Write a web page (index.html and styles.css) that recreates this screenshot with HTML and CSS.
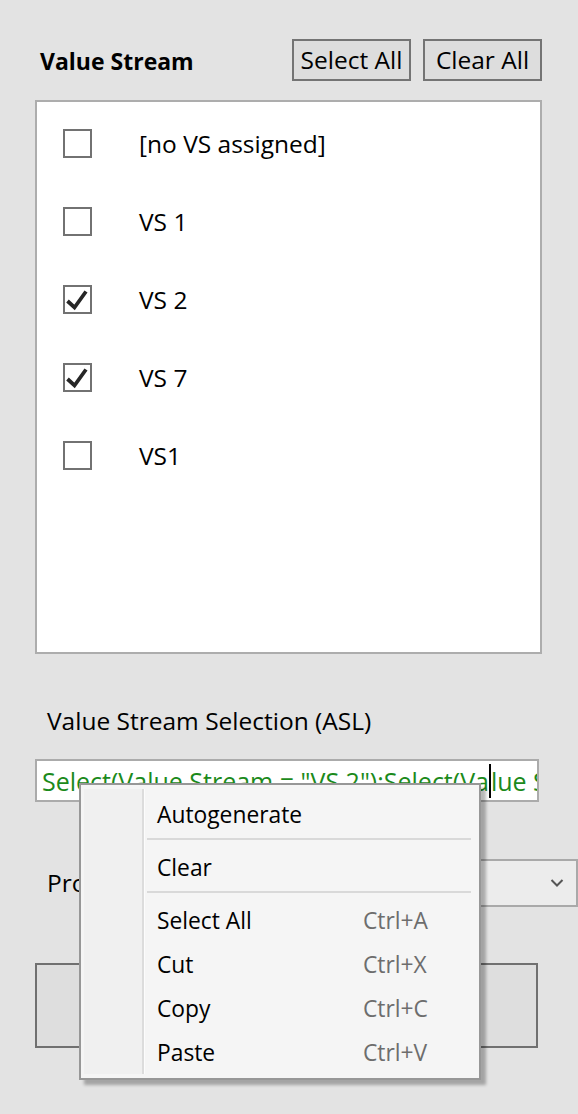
FILE: index.html
```html
<!DOCTYPE html>
<html>
<head>
<meta charset="utf-8">
<link rel="stylesheet" href="styles.css">
</head>
<body>
<div class="page">
  <div class="header">
    <span class="title">Value Stream</span>
    <div class="header-buttons">
      <button class="btn">Select All</button>
      <button class="btn">Clear All</button>
    </div>
  </div>

  <div class="listbox">
    <div class="row"><span class="check"></span><span class="item">[no VS assigned]</span></div>
    <div class="row"><span class="check"></span><span class="item">VS 1</span></div>
    <div class="row"><span class="check"><svg viewBox="0 0 25 25" width="25" height="25"><polyline points="2.5,14 9.5,20.5 21,4.5" fill="none" stroke="#262626" stroke-width="3.8" stroke-linejoin="miter"/></svg></span><span class="item">VS 2</span></div>
    <div class="row"><span class="check"><svg viewBox="0 0 25 25" width="25" height="25"><polyline points="2.5,14 9.5,20.5 21,4.5" fill="none" stroke="#262626" stroke-width="3.8" stroke-linejoin="miter"/></svg></span><span class="item">VS 7</span></div>
    <div class="row"><span class="check"></span><span class="item">VS1</span></div>
  </div>

  <div class="section-label">Value Stream Selection (ASL)</div>
  <div class="textbox"><span class="asl">Select(Value Stream = "VS 2");Select(Va</span><span class="caret"></span><span class="asl">lue S</span></div>

  <div class="combo-row">
    <span class="combo-label">Process</span>
    <div class="combo"><svg class="chev" viewBox="0 0 14 10" width="14" height="10"><polyline points="1.5,2 7,7.5 12.5,2" fill="none" stroke="#555" stroke-width="2"/></svg></div>
  </div>

  <div class="big-button"></div>

  <div class="menu">
    <div class="menu-list">
      <div class="mi"><span>Autogenerate</span><span class="sc"></span></div>
      <div class="sep"></div>
      <div class="mi"><span>Clear</span><span class="sc"></span></div>
      <div class="sep"></div>
      <div class="mi"><span>Select All</span><span class="sc">Ctrl+A</span></div>
      <div class="mi"><span>Cut</span><span class="sc">Ctrl+X</span></div>
      <div class="mi"><span>Copy</span><span class="sc">Ctrl+C</span></div>
      <div class="mi"><span>Paste</span><span class="sc">Ctrl+V</span></div>
    </div>
  </div>
</div>
</body>
</html>
```

FILE: styles.css
```css
html, body {
  margin: 0;
  padding: 0;
  background: #e3e3e3;
}
body {
  font-family: "Open Sans", "Noto Sans", sans-serif;
  font-size: 24.5px;
  color: #000;
  width: 578px;
  height: 1114px;
  overflow: hidden;
}
.page {
  position: relative;
  padding: 39px 0 0 35px;
}
.header {
  display: flex;
  align-items: center;
  width: 507px;
  height: 42px;
}
.title {
  font-weight: bold;
  font-size: 23px;
  padding-left: 5px;
  padding-top: 2px;
}
.header-buttons {
  margin-left: auto;
  display: flex;
  gap: 12px;
}
.btn {
  font-family: inherit;
  font-size: 24.5px;
  color: #000;
  background: #dddddd;
  border: 2px solid #747474;
  box-sizing: border-box;
  width: 119px;
  height: 42px;
  padding: 0;
  line-height: 36px;
  margin: 0;
}
.listbox {
  margin-top: 19px;
  width: 507px;
  height: 554px;
  box-sizing: border-box;
  border: 2px solid #adadad;
  background: #fff;
  padding-top: 2px;
}
.row {
  display: flex;
  align-items: center;
  height: 78px;
  padding-left: 26px;
}
.check {
  width: 29px;
  height: 29px;
  box-sizing: border-box;
  border: 2px solid #727272;
  background: #fff;
  display: flex;
}
.item {
  margin-left: 47px;
}
.section-label {
  margin-top: 51px;
  padding-left: 12px;
  line-height: 32px;
}
.textbox {
  margin-top: 22px;
  width: 504px;
  height: 43px;
  box-sizing: border-box;
  border: 2px solid #ababab;
  background: #fff;
  padding-left: 5px;
  white-space: nowrap;
  overflow: hidden;
  display: flex;
  align-items: center;
  line-height: 36px;
  font-size: 25px;
}
.asl {
  color: #1b8a1b;
}
.caret {
  display: inline-block;
  width: 2px;
  height: 34px;
  background: #000;
  flex: none;
}
.combo-row {
  margin-top: 57px;
  display: flex;
  align-items: center;
  height: 48px;
  padding-left: 12px;
}
.combo-label {
  line-height: 32px;
}
.combo {
  margin-left: auto;
  width: 300px;
  height: 48px;
  box-sizing: border-box;
  border: 2px solid #a9a9a9;
  background: #ececec;
  display: flex;
  align-items: center;
  justify-content: flex-end;
  padding-right: 12px;
}
.big-button {
  margin-top: 56px;
  width: 503px;
  height: 85px;
  box-sizing: border-box;
  border: 2px solid #707070;
  background: #dedede;
}
.menu {
  position: absolute;
  left: 79px;
  top: 783px;
  width: 402px;
  box-sizing: border-box;
  border: 2px solid #979797;
  background: #f5f5f5;
  padding: 4px 3px;
  box-shadow: 5px 5px 3px rgba(0, 0, 0, 0.28);
  font-size: 22.8px;
}
.menu-list {
  padding: 2px 0 1px 0;
  background: linear-gradient(to right, #f0f0f0 0, #f0f0f0 58px, #dcdcdc 58px, #dcdcdc 60px, #fcfcfc 60px, #fcfcfc 61px, transparent 61px);
}
.mi {
  display: grid;
  grid-template-columns: 206px auto;
  align-items: center;
  box-sizing: border-box;
  height: 44px;
  padding-left: 73px;
  padding-top: 3px;
  line-height: 30px;
}
.sc {
  color: #6d6d6d;
}
.sep {
  height: 2px;
  margin: 3px 5px 4px 63px;
  background: #d9d9d9;
}
```
